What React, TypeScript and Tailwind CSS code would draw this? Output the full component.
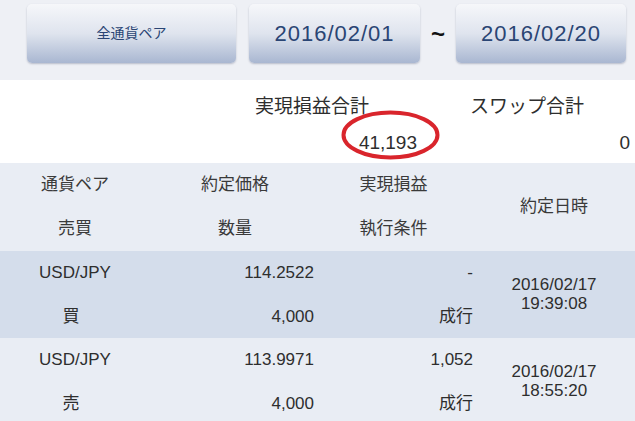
import React from "react";

const jp = { fontFamily: '"Liberation Sans", "Noto Sans CJK JP", sans-serif' };

function Btn({ w, children, small }: { w: string; children: React.ReactNode; small?: boolean }) {
  return (
    <div
      className={`${w} h-[59px] rounded-[5px] flex items-center justify-center bg-gradient-to-b from-[#f6f7fa] via-[#dfe4ee] to-[#a9b7d1] shadow-[0_1px_2px_rgba(80,90,120,0.35)] text-[#2a4574] ${
        small ? "text-[14px]" : "text-[22px] tracking-[1px]"
      }`}
    >
      {children}
    </div>
  );
}

function DataRow({
  bg,
  pair,
  side,
  price,
  qty,
  pl,
  cond,
  date,
  time,
}: {
  bg: string;
  pair: string;
  side: string;
  price: string;
  qty: string;
  pl: string;
  cond: string;
  date: string;
  time: string;
}) {
  return (
    <div className={`${bg} h-[87px] grid grid-cols-[150px_164px_159px_1fr] text-[17px] text-[#2e2e2e]`}>
      <div className="flex flex-col">
        <div className="h-[44px] flex items-center justify-center">{pair}</div>
        <div className="h-[43px] flex items-center justify-center pr-[8px]">{side}</div>
      </div>
      <div className="flex flex-col items-end">
        <div className="h-[44px] flex items-center">{price}</div>
        <div className="h-[43px] flex items-center">{qty}</div>
      </div>
      <div className="flex flex-col items-end">
        <div className="h-[44px] flex items-center">{pl}</div>
        <div className="h-[43px] flex items-center">{cond}</div>
      </div>
      <div className="flex flex-col items-center justify-center leading-[19px] pb-[2px]">
        <div>{date}</div>
        <div>{time}</div>
      </div>
    </div>
  );
}

export default function App() {
  return (
    <div className="w-[635px] h-[421px] overflow-hidden bg-white" style={jp}>
      {/* top bar */}
      <div className="h-[80px] bg-[#eef0f5] flex items-start pt-[4px] pl-[27px]">
        <Btn w="w-[209px]" small>
          全通貨ペア
        </Btn>
        <div className="w-[13px]" />
        <Btn w="w-[171px]">2016/02/01</Btn>
        <div className="w-[36px] h-[59px] flex items-center justify-center text-[24px] font-bold text-[#111]">~</div>
        <Btn w="w-[170px]">2016/02/20</Btn>
      </div>

      {/* summary */}
      <div className="h-[83px] bg-white text-[#2e2e2e]">
        <div className="h-[43px] flex items-end pb-[2px] text-[19px]">
          <div className="w-[255px]" />
          <div className="w-[215px]">実現損益合計</div>
          <div>スワップ合計</div>
        </div>
        <div className="h-[40px] flex items-center text-[19px]">
          <div className="w-[417px] flex justify-end">
            <div className="relative">
              <span>41,193</span>
              <svg
                className="absolute left-[-18px] top-[-19px]"
                width="99"
                height="50"
                viewBox="0 0 99 50"
              >
                <ellipse cx="49.5" cy="25" rx="47" ry="22.5" fill="none" stroke="#d9252c" strokeWidth="4" />
              </svg>
            </div>
          </div>
          <div className="flex-1 flex justify-end pr-[5px]">0</div>
        </div>
      </div>

      {/* header */}
      <div className="h-[88px] bg-[#e9edf4] grid grid-cols-[150px_164px_159px_1fr] text-[17px] text-[#3a3a3a]">
        <div className="flex flex-col">
          <div className="h-[44px] flex items-center justify-center">通貨ペア</div>
          <div className="h-[44px] flex items-center justify-center">売買</div>
        </div>
        <div className="flex flex-col pl-[6px]">
          <div className="h-[44px] flex items-center justify-center">約定価格</div>
          <div className="h-[44px] flex items-center justify-center">数量</div>
        </div>
        <div className="flex flex-col">
          <div className="h-[44px] flex items-center justify-center">実現損益</div>
          <div className="h-[44px] flex items-center justify-center">執行条件</div>
        </div>
        <div className="flex items-center justify-center">約定日時</div>
      </div>

      <DataRow
        bg="bg-[#d4ddeb]"
        pair="USD/JPY"
        side="買"
        price="114.2522"
        qty="4,000"
        pl="-"
        cond="成行"
        date="2016/02/17"
        time="19:39:08"
      />
      <DataRow
        bg="bg-[#e9edf4]"
        pair="USD/JPY"
        side="売"
        price="113.9971"
        qty="4,000"
        pl="1,052"
        cond="成行"
        date="2016/02/17"
        time="18:55:20"
      />
    </div>
  );
}
